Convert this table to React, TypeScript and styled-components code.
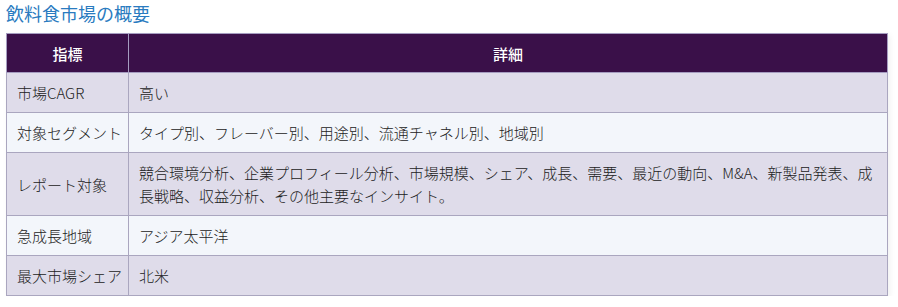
import styled, { createGlobalStyle } from "styled-components";

const GlobalStyle = createGlobalStyle`
  body {
    margin: 0;
    background: #ffffff;
    font-family: "Noto Sans CJK JP", "Noto Sans", sans-serif;
  }
`;

const Wrapper = styled.section`
  padding: 0 6px;
`;

const Heading = styled.h2`
  margin: 0 0 6px;
  font-size: 18px;
  line-height: 27px;
  font-weight: 400;
  color: #2a7bc0;
`;

const Table = styled.table`
  width: 882px;
  border-collapse: collapse;
  table-layout: fixed;
  font-size: 15px;
  font-weight: 300;
  color: #222222;
  box-shadow: 2px 2px 6px rgba(0, 0, 0, 0.06);
`;

const HeadCell = styled.th<{ $width?: number }>`
  box-sizing: border-box;
  width: ${p => (p.$width ? `${p.$width}px` : "auto")};
  height: 39px;
  padding: 0 8px;
  background: #3a1049;
  color: #ffffff;
  font-weight: 500;
  text-align: center;
  border: 1px solid #a59cc0;
`;

const Row = styled.tr<{ $alt: boolean }>`
  background: ${p => (p.$alt ? "#f3f6fb" : "#dfdcea")};
`;

const Cell = styled.td`
  padding: 8px 4px 8px 10px;
  line-height: 23px;
  vertical-align: middle;
  border: 1px solid #aaa6bf;
  text-align: left;
`;

const rows: [string, string][] = [
  ["市場CAGR", "高い"],
  ["対象セグメント", "タイプ別、フレーバー別、用途別、流通チャネル別、地域別"],
  [
    "レポート対象",
    "競合環境分析、企業プロフィール分析、市場規模、シェア、成長、需要、最近の動向、M&A、新製品発表、成長戦略、収益分析、その他主要なインサイト。",
  ],
  ["急成長地域", "アジア太平洋"],
  ["最大市場シェア", "北米"],
];

export default function App() {
  return (
    <Wrapper>
      <GlobalStyle />
      <Heading>飲料食市場の概要</Heading>
      <Table>
        <thead>
          <tr>
            <HeadCell $width={122}>指標</HeadCell>
            <HeadCell>詳細</HeadCell>
          </tr>
        </thead>
        <tbody>
          {rows.map(([label, value], i) => (
            <Row key={label} $alt={i % 2 === 1}>
              <Cell>{label}</Cell>
              <Cell>{value}</Cell>
            </Row>
          ))}
        </tbody>
      </Table>
    </Wrapper>
  );
}
